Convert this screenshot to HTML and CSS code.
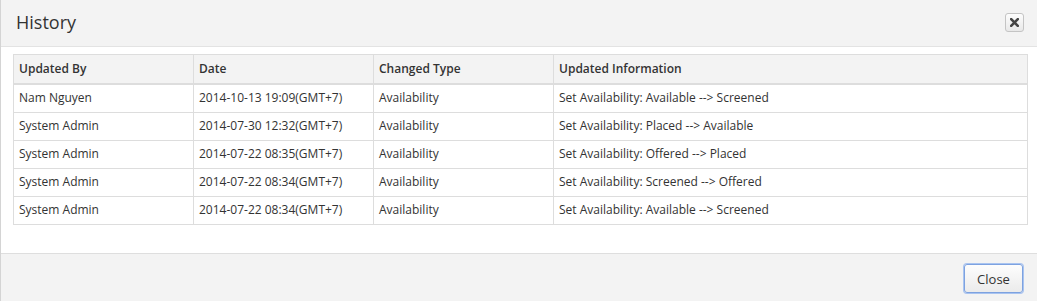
FILE: index.html
```html
<!DOCTYPE html>
<html lang="en">
<head>
  <meta charset="UTF-8" />
  <title>History</title>
  <link rel="stylesheet" href="styles.css">
</head>
<body>

  <div class="modal">
    <div class="modal-header">
      <h3>History</h3>
      <button class="x-button" title="Close">
        <svg width="9" height="9" viewBox="0 0 9 9"><path d="M1.2 1.2 L7.8 7.8 M7.8 1.2 L1.2 7.8" stroke="#444" stroke-width="2.6" stroke-linecap="square"/></svg>
      </button>
    </div>

    <div class="modal-body">
      <table class="history">
        <thead>
          <tr>
            <th class="col-by">Updated By</th>
            <th class="col-date">Date</th>
            <th class="col-type">Changed Type</th>
            <th>Updated Information</th>
          </tr>
        </thead>
        <tbody>
          <tr><td>Nam Nguyen</td><td>2014-10-13 19:09(GMT+7)</td><td>Availability</td><td>Set Availability: Available --&gt; Screened</td></tr>
          <tr><td>System Admin</td><td>2014-07-30 12:32(GMT+7)</td><td>Availability</td><td>Set Availability: Placed --&gt; Available</td></tr>
          <tr><td>System Admin</td><td>2014-07-22 08:35(GMT+7)</td><td>Availability</td><td>Set Availability: Offered --&gt; Placed</td></tr>
          <tr><td>System Admin</td><td>2014-07-22 08:34(GMT+7)</td><td>Availability</td><td>Set Availability: Screened --&gt; Offered</td></tr>
          <tr><td>System Admin</td><td>2014-07-22 08:34(GMT+7)</td><td>Availability</td><td>Set Availability: Available --&gt; Screened</td></tr>
        </tbody>
      </table>
    </div>

    <div class="modal-footer">
      <button class="close-button">Close</button>
    </div>
  </div>

</body>
</html>
```

FILE: styles.css
```css
body {
  margin: 0;
  font-family: 'Open Sans', sans-serif;
  font-size: 12px;
  color: #333;
  background: #fff;
}

.modal {
  border-left: 1px solid #d4d4d4;
  height: 301px;
  display: flex;
  flex-direction: column;
}

.modal-header {
  height: 46px;
  background: #f3f3f3;
  border-bottom: 1px solid #e3e3e3;
  display: flex;
  align-items: center;
  justify-content: space-between;
  padding: 0 13px 0 15px;
}

.modal-header h3 {
  margin: 0 0 2px 0;
  font-size: 18px;
  font-weight: normal;
  color: #333;
}

.x-button {
  width: 19px;
  height: 19px;
  padding: 0;
  border: 1px solid #c4c4c4;
  border-radius: 3px;
  background: linear-gradient(#fdfdfd, #e8e8e8);
  display: flex;
  align-items: center;
  justify-content: center;
  margin-bottom: 1px;
}

.modal-body {
  padding: 7px 10px 0 12px;
  flex: 1;
}

.history {
  width: 1015px;
  border-collapse: collapse;
  border: 1px solid #ddd;
}

.history th,
.history td {
  border: 1px solid #ddd;
  text-align: left;
  padding: 4px 5px 5px 5px;
  height: 18px;
  line-height: 18px;
}

.history th {
  background: #f3f3f3;
  font-weight: 600;
  border-bottom: 2px solid #ddd;
  padding-top: 5px;
}

.col-by,
.col-date,
.col-type {
  width: 169px;
}

.modal-footer {
  height: 47px;
  background: #f3f3f3;
  border-top: 1px solid #dedede;
  display: flex;
  align-items: center;
  justify-content: flex-end;
  padding: 0 14px 0 0;
}

.close-button {
  font-family: 'Open Sans', sans-serif;
  font-size: 13px;
  color: #333;
  width: 59px;
  height: 29px;
  border: 1px solid #7da2e0;
  box-shadow: 0 0 0 1px #a9c4f0;
  border-radius: 3px;
  background: linear-gradient(#fdfdfd, #ebebeb);
  margin-top: 2px;
}
```
